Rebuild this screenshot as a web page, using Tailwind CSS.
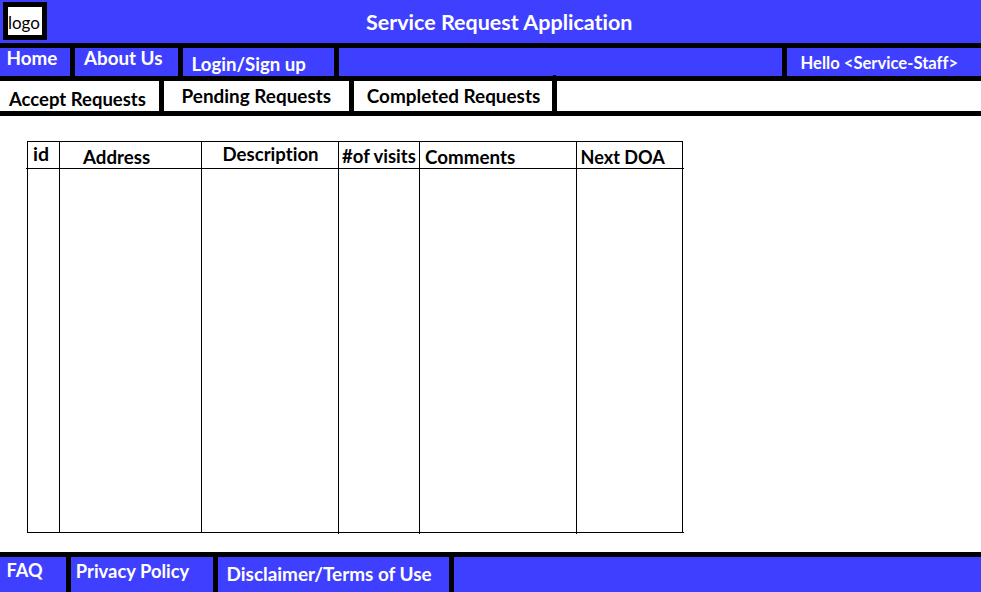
<!DOCTYPE html>
<html lang="en">
<head>
<meta charset="utf-8">
<title>Service Request Application</title>
<script src="https://cdn.jsdelivr.net/npm/@tailwindcss/browser@4"></script>
</head>
<body class="w-[981px] h-[592px] overflow-hidden bg-white text-black font-['Lato',sans-serif] font-bold text-[18.8px] leading-5 whitespace-nowrap [font-variant-ligatures:none] flex flex-col">
  <header class="h-12 shrink-0 flex bg-[#3f3fff] border-b-5 border-black">
    <div class="w-11 h-[38px] mt-0.5 ml-[3px] shrink-0 border-x-5 border-y-5 border-black bg-white pt-[6px] font-normal text-[17px]">logo</div>
    <h1 class="pl-[319px] pt-3 text-[21.5px] text-white">Service Request Application</h1>
  </header>
  <nav class="h-[33px] shrink-0 flex bg-[#3f3fff] border-b-5 border-black text-white">
    <a class="w-[75px] shrink-0 border-r-5 border-black pl-[6.6px]">Home</a>
    <a class="w-[108px] shrink-0 border-r-5 border-black pl-[9px]">About Us</a>
    <a class="w-[156px] shrink-0 border-r-5 border-black pl-[8.6px] pt-1.5 text-[18.6px]">Login/Sign up</a>
    <div class="w-[448px] shrink-0 border-r-5 border-black"></div>
    <div class="pl-[13.6px] pt-[5px] text-[16.6px]">Hello &lt;Service-Staff&gt;</div>
  </nav>
  <nav class="h-[35px] shrink-0 flex border-b-5 border-black">
    <a class="w-[164px] shrink-0 border-r-5 border-black pl-[9px] pt-2 text-[18.5px]">Accept Requests</a>
    <a class="w-[190px] shrink-0 border-r-5 border-black pl-[17.6px] pt-[5px] text-[18.9px]">Pending Requests</a>
    <a class="relative w-[203px] shrink-0 border-r-5 border-black pl-[12.8px] pt-[5px] text-[18.9px]">Completed Requests<i class="absolute -top-1.5 -right-1 w-[3px] h-px bg-black"></i></a>
  </nav>
  <main class="h-[436px] shrink-0 pt-[25px] pl-[26px]">
    <div class="relative w-[658px] h-[393px] flex">
      <div class="absolute left-px top-0 w-[656px] h-px bg-black"></div>
      <div class="absolute left-0 top-[27px] w-[658px] h-px bg-black"></div>
      <div class="absolute left-px bottom-px w-[657px] h-px bg-black"></div>
      <div class="w-[33px] h-[392px] border-l border-black ml-px pl-[5px] pt-[3px] mr-[-1px] text-[19.5px]">id</div>
      <div class="w-[142px] h-[392px] border-l border-black pl-[23px] pt-1.5 text-[18.7px]">Address</div>
      <div class="w-[137px] h-[392px] border-l border-black pl-[20.6px] pt-[3px] text-[18.6px]">Description</div>
      <div class="w-[81px] h-[393px] border-l border-black pl-[3px] pt-[5px] text-[18.5px]">#of visits</div>
      <div class="w-[157px] h-[393px] border-l border-black pl-[5px] pt-1.5 text-[18.8px]">Comments</div>
      <div class="w-[107px] h-[393px] border-l border-black pl-[3.6px] pt-1.5 text-[18.1px]">Next DOA</div>
      <div class="absolute left-[656px] top-0 w-px h-[392px] bg-black"></div>
    </div>
  </main>
  <footer class="h-10 shrink-0 flex bg-[#3f3fff] border-t-5 border-black text-white">
    <a class="w-[71px] shrink-0 border-r-5 border-black pl-[6.6px] pt-[3px] text-[18.1px]">FAQ</a>
    <a class="w-[147px] shrink-0 border-r-5 border-black pl-[4.8px] pt-1 text-[18.4px]">Privacy Policy</a>
    <a class="w-[236px] shrink-0 border-r-5 border-black pl-[8.6px] pt-[7px] text-[18.9px]">Disclaimer/Terms of Use</a>
  </footer>
</body>
</html>
